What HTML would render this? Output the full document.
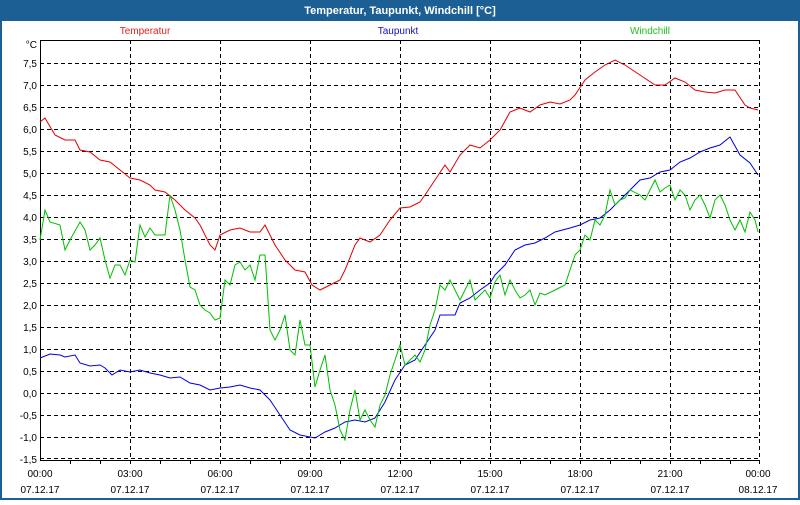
<!DOCTYPE html>
<html><head><style>
body{margin:0;width:800px;height:500px;overflow:hidden;background:#fff;font-family:"Liberation Sans",sans-serif}
</style></head><body>
<svg width="800" height="500" xmlns="http://www.w3.org/2000/svg" font-family="Liberation Sans, sans-serif" font-size="10">
<rect x="0" y="0" width="800" height="500" fill="#1c5f94"/>
<rect x="2" y="21" width="796" height="477" fill="#fff"/>
<text x="400" y="14" fill="#fff" font-weight="bold" font-size="11" text-anchor="middle">Temperatur, Taupunkt, Windchill [°C]</text>
<text x="145" y="34" fill="#e02020" text-anchor="middle">Temperatur</text>
<text x="398" y="34" fill="#1010c0" text-anchor="middle">Taupunkt</text>
<text x="650" y="34" fill="#20c020" text-anchor="middle">Windchill</text>
<g stroke="#000" stroke-width="1" stroke-dasharray="4,3" fill="none">
<path d="M40 63.5H760M40 85.5H760M40 107.5H760M40 129.5H760M40 151.5H760M40 173.5H760M40 195.5H760M40 217.5H760M40 239.5H760M40 261.5H760M40 283.5H760M40 305.5H760M40 327.5H760M40 349.5H760M40 371.5H760M40 393.5H760M40 415.5H760M40 437.5H760M40 458.5H760"/>
<path d="M130.5 40V460M220.5 40V460M310.5 40V460M400.5 40V460M490.5 40V460M580.5 40V460M670.5 40V460M759.5 40V460"/>
</g>
<g stroke="#000" stroke-width="1" fill="none">
<path d="M40.5 40V461M40 40.5H760M40 460.5H760"/>
<path d="M70.5 460v4M100.5 460v4M130.5 460v4M160.5 460v4M190.5 460v4M220.5 460v4M250.5 460v4M280.5 460v4M310.5 460v4M340.5 460v4M370.5 460v4M400.5 460v4M430.5 460v4M460.5 460v4M490.5 460v4M520.5 460v4M550.5 460v4M580.5 460v4M610.5 460v4M640.5 460v4M670.5 460v4M700.5 460v4M730.5 460v4M759.5 460v4"/>
</g>
<g text-anchor="end" fill="#000">
<text x="37" y="48">°C</text>
<text x="37" y="67">7,5</text><text x="37" y="89">7,0</text><text x="37" y="111">6,5</text><text x="37" y="133">6,0</text><text x="37" y="155">5,5</text><text x="37" y="177">5,0</text><text x="37" y="199">4,5</text><text x="37" y="221">4,0</text><text x="37" y="243">3,5</text><text x="37" y="265">3,0</text><text x="37" y="287">2,5</text><text x="37" y="309">2,0</text><text x="37" y="331">1,5</text><text x="37" y="353">1,0</text><text x="37" y="375">0,5</text><text x="37" y="397">0,0</text><text x="37" y="419">-0,5</text><text x="37" y="441">-1,0</text><text x="37" y="463">-1,5</text>
</g>
<g text-anchor="middle" fill="#000">
<text x="40" y="477">00:00</text><text x="130" y="477">03:00</text><text x="220" y="477">06:00</text><text x="310" y="477">09:00</text><text x="400" y="477">12:00</text><text x="490" y="477">15:00</text><text x="580" y="477">18:00</text><text x="670" y="477">21:00</text><text x="758" y="477">00:00</text>
<text x="40" y="493">07.12.17</text><text x="130" y="493">07.12.17</text><text x="220" y="493">07.12.17</text><text x="310" y="493">07.12.17</text><text x="400" y="493">07.12.17</text><text x="490" y="493">07.12.17</text><text x="580" y="493">07.12.17</text><text x="670" y="493">07.12.17</text><text x="758" y="493">08.12.17</text>
</g>
<polyline fill="none" stroke="#e00000" points="40,122 45,118 55,135 65,140 75,140 80,150 90,152 100,160 110,162 120,170 130,178 140,180 150,185 155,190 165,192 175,200 185,210 195,218 200,225 210,245 215,250 220,235 230,230 240,228 250,232 260,232 265,225 275,245 285,260 295,270 305,272 312,285 320,290 330,285 340,280 345,270 355,245 360,238 370,242 380,235 390,220 400,208 410,207 420,202 425,195 435,180 445,165 450,172 460,155 470,145 480,148 490,140 500,130 510,112 520,108 530,112 540,105 550,102 560,104 570,100 575,95 585,80 595,72 605,65 615,60 625,65 640,75 655,85 665,85 675,78 685,82 695,90 705,92 715,93 725,90 735,90 745,105 750,108 758,110"/>
<polyline fill="none" stroke="#0000e0" points="40,358 50,354 60,355 65,357 75,355 80,363 90,366 100,365 105,368 112,375 120,370 130,372 140,370 150,373 160,375 170,378 180,377 190,383 200,385 210,390 220,388 230,387 240,385 250,388 260,390 270,400 280,415 290,430 300,435 315,438 325,432 335,428 345,422 355,420 365,422 375,418 385,402 395,380 405,365 415,360 425,345 435,330 440,315 455,315 460,303 470,298 480,290 490,283 495,275 505,265 515,250 525,245 535,243 545,238 555,232 570,228 580,225 590,220 600,218 610,210 620,200 630,190 640,180 650,178 660,172 670,170 680,162 690,158 700,152 710,148 720,145 730,137 740,155 750,163 758,175"/>
<polyline fill="none" stroke="#00c000" points="40,240 45,210 50,222 60,225 65,250 70,240 80,222 85,230 90,250 95,245 100,238 105,260 110,278 115,265 120,265 125,275 130,260 135,262 140,225 145,237 150,228 155,235 165,235 170,195 175,210 180,230 185,260 190,287 195,290 200,305 205,310 210,313 215,320 220,318 225,280 230,285 235,265 240,262 245,270 250,265 255,280 260,255 265,255 270,330 275,340 280,330 285,315 290,350 295,355 300,320 305,345 310,345 315,387 320,370 325,355 330,390 335,405 340,430 345,440 350,410 355,390 360,420 365,410 370,420 375,427 380,405 385,395 390,375 395,360 400,345 405,365 410,360 415,355 420,362 425,350 430,325 435,310 440,285 445,290 450,280 455,290 460,300 465,290 470,280 475,300 480,295 485,290 490,298 495,282 500,275 505,295 510,280 515,290 520,298 525,295 530,290 535,305 540,293 545,295 555,290 565,285 575,255 580,250 585,235 590,240 595,220 600,225 605,215 610,190 615,205 620,200 625,198 630,190 640,195 645,200 650,190 655,180 660,192 665,188 670,185 675,200 680,190 685,195 690,210 695,200 700,195 705,205 710,218 715,200 720,195 725,205 730,220 735,230 740,220 745,232 750,212 755,220 758,232"/>
</svg>
</body></html>
